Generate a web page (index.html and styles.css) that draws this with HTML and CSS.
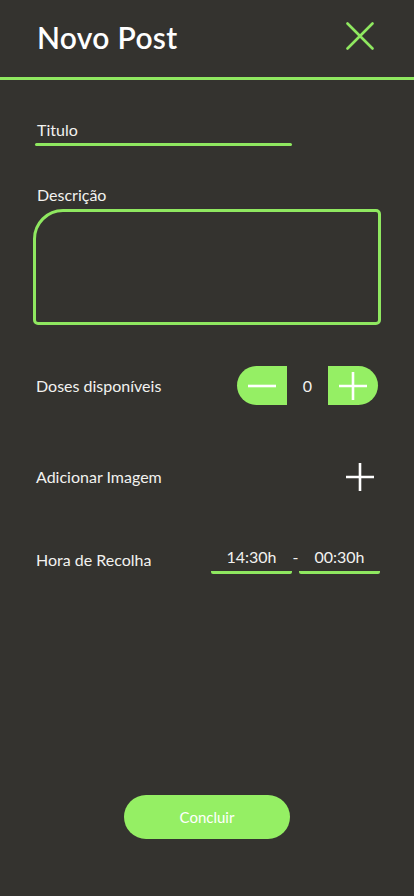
FILE: index.html
```html
<!DOCTYPE html>
<html lang="pt">
<head>
<meta charset="utf-8">
<title>Novo Post</title>
<link rel="stylesheet" href="styles.css">
</head>
<body>
<div class="screen">
  <header class="topbar">
    <h1 class="title">Novo Post</h1>
    <svg class="close" width="28" height="28" viewBox="0 0 28 28" aria-hidden="true">
      <path d="M1.5 1.5 L26.5 26.5 M26.5 1.5 L1.5 26.5" stroke="#8fe860" stroke-width="2.6" stroke-linecap="round" fill="none"/>
    </svg>
  </header>

  <main class="form">
    <div class="field-title">
      <div class="label">Titulo</div>
      <div class="underline underline-long"></div>
    </div>

    <div class="field-desc">
      <div class="label">Descrição</div>
      <div class="textbox"></div>
    </div>

    <div class="row row-doses">
      <div class="label">Doses disponíveis</div>
      <div class="stepper">
        <div class="step step-minus">
          <svg width="28" height="4" viewBox="0 0 28 4"><path d="M0 2 H28" stroke="#fff" stroke-width="2.6"/></svg>
        </div>
        <div class="count">0</div>
        <div class="step step-plus">
          <svg width="28" height="28" viewBox="0 0 28 28"><path d="M0 14 H28 M14 0 V28" stroke="#fff" stroke-width="2.6"/></svg>
        </div>
      </div>
    </div>

    <div class="row row-image">
      <div class="label">Adicionar Imagem</div>
      <svg class="add" width="28" height="28" viewBox="0 0 28 28"><path d="M0 14 H28 M14 0 V28" stroke="#fff" stroke-width="2.6"/></svg>
    </div>

    <div class="row row-hours">
      <div class="label">Hora de Recolha</div>
      <div class="times">
        <div class="time">14:30h</div>
        <div class="dash">-</div>
        <div class="time">00:30h</div>
      </div>
    </div>
  </main>

  <div class="actions">
    <button class="submit">Concluir</button>
  </div>
</div>
</body>
</html>
```

FILE: styles.css
```css
html, body {
  margin: 0;
  padding: 0;
  background: #34332f;
}

body {
  font-family: Lato, "Noto Sans", sans-serif;
  color: #f4f4f2;
}

.screen {
  width: 414px;
  height: 896px;
  display: flex;
  flex-direction: column;
}

.topbar {
  height: 77px;
  box-sizing: content-box;
  display: flex;
  align-items: center;
  justify-content: space-between;
  padding: 0 40px 0 37px;
  border-bottom: 3px solid #8fe860;
}

.title {
  margin: 0;
  font-size: 30px;
  font-weight: 600;
  color: #ffffff;
  letter-spacing: 0.3px;
  position: relative;
  top: -2px;
}

.close {
  display: block;
  position: relative;
  top: -3px;
}

.form {
  padding: 0 33px 0 35px;
  display: flex;
  flex-direction: column;
}

.label {
  font-size: 16px;
  line-height: 20px;
  color: #f2f2ef;
}

.field-title {
  margin-top: 40px;
}

.field-title .label {
  padding-left: 2px;
}

.underline {
  height: 3px;
  background: #8fe860;
  border-radius: 2px;
}

.underline-long {
  width: 257px;
  margin-top: 3px;
}

.field-desc {
  margin-top: 39px;
}

.field-desc .label {
  padding-left: 2px;
}

.textbox {
  margin-top: 4px;
  margin-left: -2px;
  width: 348px;
  height: 116px;
  box-sizing: border-box;
  border: 3px solid #8fe860;
  border-radius: 30px 5px 5px 5px;
}

.row {
  display: flex;
  align-items: center;
  justify-content: space-between;
  padding-left: 1px;
}

.row-doses {
  margin-top: 41px;
  height: 39px;
}

.stepper {
  display: flex;
  align-items: center;
  margin-right: 3px;
}

.step {
  width: 50px;
  height: 39px;
  background: #95ef64;
  display: flex;
  align-items: center;
  justify-content: center;
}

.step svg {
  display: block;
}

.step-minus {
  border-radius: 20px 0 0 20px;
}

.step-plus {
  border-radius: 0 20px 20px 0;
}

.count {
  width: 41px;
  text-align: center;
  font-size: 16px;
  color: #f2f2ef;
}

.row-image {
  margin-top: 58px;
  height: 28px;
}

.add {
  display: block;
  margin-right: 7px;
}

.row-hours {
  margin-top: 56px;
  align-items: flex-start;
}

.row-hours .label {
  margin-top: 3px;
}

.times {
  display: flex;
  align-items: flex-start;
  margin-right: 1px;
}

.time {
  width: 81px;
  text-align: center;
  font-size: 16px;
  line-height: 20px;
  color: #f2f2ef;
  padding-bottom: 4px;
  border-bottom: 3px solid #8fe860;
  border-radius: 0 0 2px 2px;
}

.dash {
  width: 7px;
  text-align: center;
  font-size: 16px;
  line-height: 20px;
  color: #f2f2ef;
}

.actions {
  margin-top: auto;
  margin-bottom: 57px;
  display: flex;
  justify-content: center;
}

.submit {
  width: 166px;
  height: 44px;
  border: none;
  border-radius: 22px;
  background: #95ef64;
  color: #ffffff;
  font-family: Lato, "Noto Sans", sans-serif;
  font-size: 15px;
  padding: 0;
}
```
